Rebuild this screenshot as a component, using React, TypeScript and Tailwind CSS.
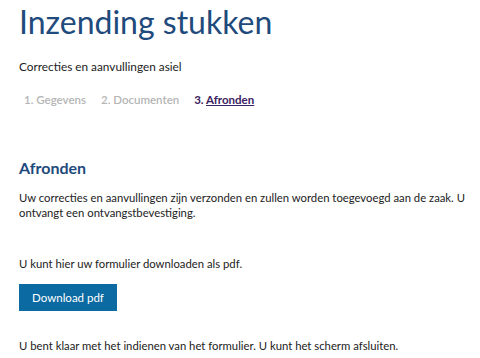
export default function App() {
  return (
    <div className="min-h-[358px] bg-white pl-[19px] pr-[10px] pt-[2px] font-['Lato',sans-serif] text-[#222]">
      <h1 className="text-[32px] leading-[40px] text-[#1f4a7c]">Inzending stukken</h1>
      <p className="mt-[17px] text-[11.8px] leading-[16px]">Correcties en aanvullingen asiel</p>

      <ol className="mt-[17px] flex gap-[15px] pl-[5px] text-[11.5px] font-semibold leading-[16px]">
        <li className="text-[#b5b5b5]">1. Gegevens</li>
        <li className="text-[#b5b5b5]">2. Documenten</li>
        <li className="font-bold text-[#3b2260]">
          3. <span className="underline">Afronden</span>
        </li>
      </ol>

      <h2 className="mt-[49px] text-[16px] font-bold leading-[22px] text-[#1f4a7c]">Afronden</h2>
      <p className="mt-[11px] text-[11.3px] leading-[15px]">
        Uw correcties en aanvullingen zijn verzonden en zullen worden toegevoegd aan de zaak. U
        ontvangt een ontvangstbevestiging.
      </p>

      <p className="mt-[36px] text-[11.3px] leading-[16px]">U kunt hier uw formulier downloaden als pdf.</p>
      <button className="mt-[12px] h-[27px] w-[98px] bg-[#0b6aa2] text-[11.5px] text-white">Download pdf</button>
      <p className="mt-[27px] text-[11.3px] leading-[16px]">
        U bent klaar met het indienen van het formulier. U kunt het scherm afsluiten.
      </p>
    </div>
  );
}
